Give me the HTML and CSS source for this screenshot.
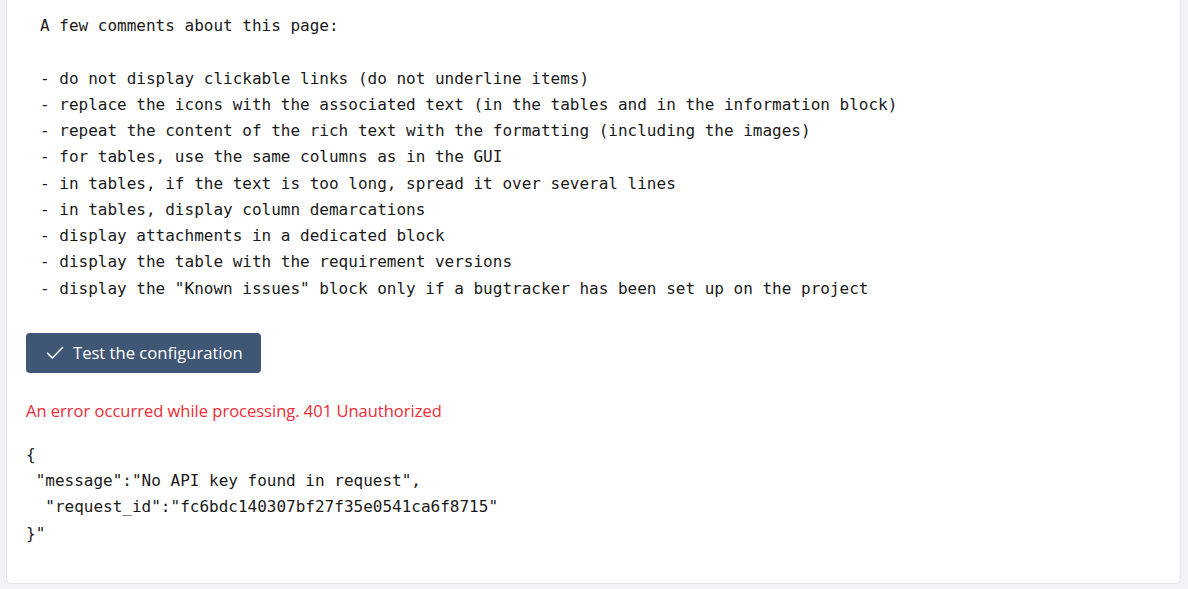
FILE: index.html
```html
<!DOCTYPE html>
<html>
<head>
<meta charset="utf-8">
<link rel="stylesheet" href="styles.css">
</head>
<body>
<div class="card">
<pre class="comments">A few comments about this page:

- do not display clickable links (do not underline items)
- replace the icons with the associated text (in the tables and in the information block)
- repeat the content of the rich text with the formatting (including the images)
- for tables, use the same columns as in the GUI
- in tables, if the text is too long, spread it over several lines
- in tables, display column demarcations
- display attachments in a dedicated block
- display the table with the requirement versions
- display the "Known issues" block only if a bugtracker has been set up on the project</pre>
<button class="btn" type="button"><svg class="check" width="18" height="14" viewBox="0 0 18 14"><path d="M1.5 7.2 L6.3 12 L16.5 1.5" fill="none" stroke="#ffffff" stroke-width="1.6" stroke-linecap="round" stroke-linejoin="round"/></svg><span>Test the configuration</span></button>
<p class="error">An error occurred while processing. 401 Unauthorized</p>
<pre class="json">{
 "message":"No API key found in request",
  "request_id":"fc6bdc140307bf27f35e0541ca6f8715"
}"</pre>
</div>
</body>
</html>
```
FILE: styles.css
```css
html, body {
  margin: 0;
  padding: 0;
}
body {
  background: #f2f3f6;
  height: 589px;
  overflow: hidden;
}
.card {
  margin: 0 7px 0 6px;
  background: #ffffff;
  border: 1px solid #e1e4e9;
  border-top: none;
  border-radius: 0 0 5px 5px;
  padding: 13px 19px 36px 19px;
}
.comments, .json {
  font-family: "DejaVu Sans Mono", "Liberation Mono", monospace;
  font-size: 16px;
  line-height: 26.25px;
  color: #1a1a1a;
  margin: 0;
  white-space: pre;
}
.comments {
  padding-left: 14px;
}
.btn {
  margin-top: 31px;
  display: flex;
  align-items: center;
  gap: 9px;
  height: 40px;
  width: 235px;
  padding: 0 0 0 20px;
  background: #3f5675;
  color: #ffffff;
  border: none;
  border-radius: 4px;
  font-family: "Open Sans", "Noto Sans", sans-serif;
  font-size: 16.6px;
  cursor: pointer;
}
.check {
  flex: none;
}
.error {
  margin: 27px 0 0 0;
  color: #ee2b36;
  font-family: "Open Sans", "Noto Sans", sans-serif;
  font-size: 16.5px;
  line-height: 22px;
}
.json {
  margin-top: 20px;
}
```
